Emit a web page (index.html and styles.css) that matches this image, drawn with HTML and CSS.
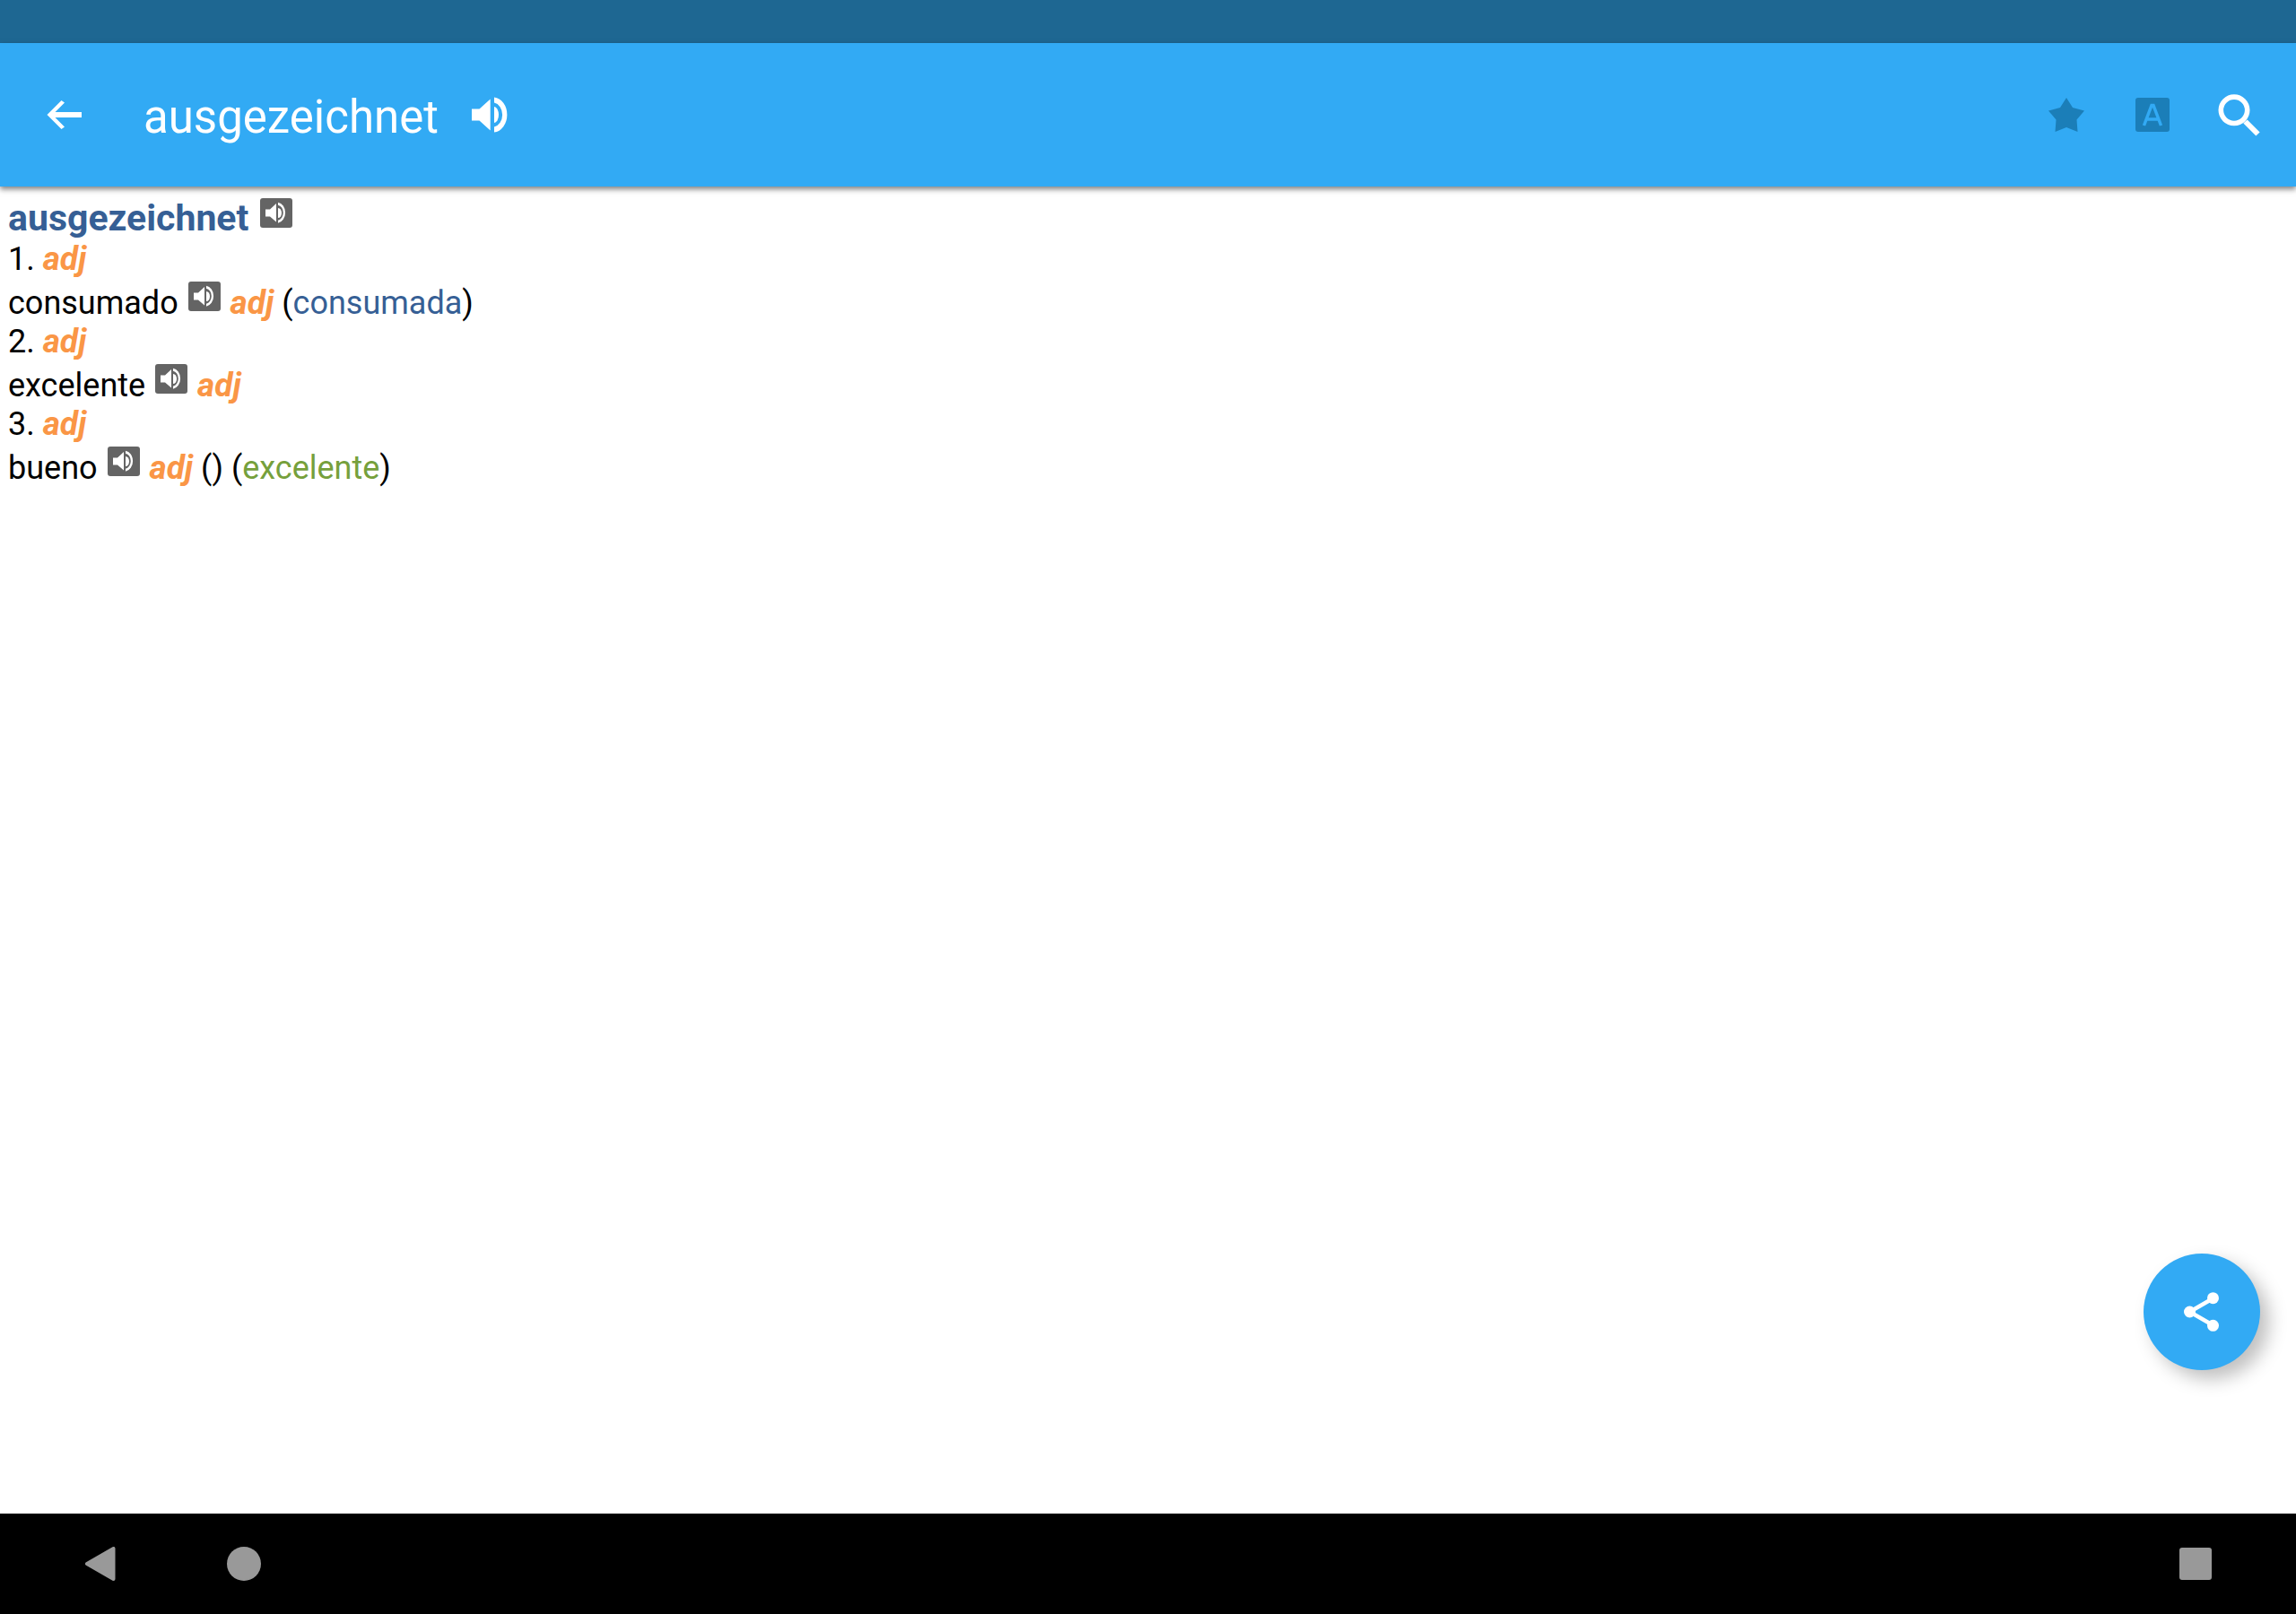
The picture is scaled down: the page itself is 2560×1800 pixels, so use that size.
FILE: index.html
```html
<!DOCTYPE html>
<html lang="de">
<head>
<meta charset="utf-8">
<title>ausgezeichnet</title>
<link rel="stylesheet" href="styles.css">
</head>
<body>
<svg width="0" height="0" class="sprite" aria-hidden="true">
  <symbol id="speaker-badge" viewBox="0 0 36 33">
    <rect width="36" height="33" rx="3" fill="#646464"/>
    <path d="M6 12.500h5L18 6v20.500L11 20.500H6z" fill="#fff"/>
    <path d="M20 11a4 5.500 0 0 1 0 11z" fill="#fff"/>
    <path d="M20 4.700a9.300 11.600 0 0 1 0 23v-3a6.800 8.600 0 0 0 0-17z" fill="#fff"/>
  </symbol>
</svg>
<div class="status-bar"></div>
<header class="app-bar">
  <button class="icon-button back" aria-label="Back">
    <svg width="40" height="36" viewBox="0 0 40 36"><path d="M.5 18 16.500 2 20 4.500 9.500 15H39v6H9.500L20 31.500 16.500 34z" fill="#fff"/></svg>
  </button>
  <h1 class="title">ausgezeichnet</h1>
  <button class="icon-button speak" aria-label="Pronounce">
    <svg width="42" height="40" viewBox="0 0 42 40"><path d="M0 13.500h8.500L20.700 2.500v35L8.500 26.500H0z" fill="#fff"/><path d="M25 11a5 9 0 0 1 0 18z" fill="#fff"/><path d="M25 .5a16 19.600 0 0 1 0 39v-6a11 13.700 0 0 0 0-27z" fill="#fff"/></svg>
  </button>
  <div class="actions">
    <button class="icon-button" aria-label="Favourite">
      <svg width="40" height="38" viewBox="0 0 40 38"><path d="M20 0 27 11 40 14.500 31.500 24.500 32.500 38 20 33 7.500 38 8.500 24.500 0 14.500 13 11z" fill="#1b7eb8"/></svg>
    </button>
    <button class="icon-button" aria-label="Text">
      <svg width="38" height="38" viewBox="0 0 38 38"><rect width="38" height="38" rx="3" fill="#1b7eb8"/><path d="M9.500 31 18 8.500h2L28.500 31M12.500 24h13" fill="none" stroke="#32aaf4" stroke-width="3.500"/></svg>
    </button>
    <button class="icon-button" aria-label="Search">
      <svg width="48" height="48" viewBox="0 0 48 48"><circle cx="19" cy="18.800" r="14.700" fill="none" stroke="#fff" stroke-width="5.600"/><path d="m31.500 31.500 14 14" stroke="#fff" stroke-width="6"/></svg>
    </button>
  </div>
</header>
<main class="entry">
  <h2 class="headword">ausgezeichnet <button class="badge" aria-label="Pronounce"><svg width="36" height="33"><use href="#speaker-badge"/></svg></button></h2>
  <p class="sense">1. <em>adj</em></p>
  <p class="term">consumado <button class="badge" aria-label="Pronounce"><svg width="36" height="33"><use href="#speaker-badge"/></svg></button> <em>adj</em> (<span class="form">consumada</span>)</p>
  <p class="sense">2. <em>adj</em></p>
  <p class="term">excelente <button class="badge" aria-label="Pronounce"><svg width="36" height="33"><use href="#speaker-badge"/></svg></button> <em>adj</em></p>
  <p class="sense">3. <em>adj</em></p>
  <p class="term">bueno <button class="badge" aria-label="Pronounce"><svg width="36" height="33"><use href="#speaker-badge"/></svg></button> <em>adj</em> () (<span class="hint">excelente</span>)</p>
  <button class="fab" aria-label="Share">
    <svg width="40" height="44" viewBox="0 0 40 44"><path d="M32.500 7 6.500 22l26 15" fill="none" stroke="#fff" stroke-width="4.500"/><g fill="#fff"><circle cx="32.500" cy="6.700" r="6.500"/><circle cx="6.500" cy="22" r="6.500"/><circle cx="32.500" cy="37.300" r="6.500"/></g></svg>
  </button>
</main>
<nav class="nav-bar">
  <button class="icon-button" aria-label="Back"><svg width="34" height="38" viewBox="0 0 34 38"><path d="M2 19 31.500 2v34z" fill="#999" stroke="#999" stroke-width="4" stroke-linejoin="round"/></svg></button>
  <button class="icon-button" aria-label="Home"><svg width="38" height="38"><circle cx="19" cy="19" r="19" fill="#999"/></svg></button>
  <button class="icon-button recent" aria-label="Recent apps"><svg width="36" height="36"><rect width="36" height="36" rx="3" fill="#999"/></svg></button>
</nav>
</body>
</html>
```
FILE: styles.css
```css
* {
  box-sizing: border-box;
}

body {
  margin: 0;
  min-height: 100vh;
  display: flex;
  flex-direction: column;
  background: #fff;
  color: #000;
  font-family: Roboto, "Liberation Sans", sans-serif;
}

button {
  padding: 0;
  border: 0;
  background: none;
}

svg {
  display: block;
}

.sprite {
  position: absolute;
}

.status-bar {
  height: 48px;
  background: #1e6792;
}

.app-bar {
  display: flex;
  align-items: center;
  height: 160px;
  padding: 0 16px 0 24px;
  background: #32aaf4;
  box-shadow: 0 3px 6px rgba(0, 0, 0, 0.5);
}

.icon-button {
  display: flex;
  align-items: center;
  justify-content: center;
  width: 96px;
  height: 96px;
}

.title {
  margin: 0;
  padding: 6px 0 0 40px;
  color: #fff;
  font-size: 51px;
  font-weight: 400;
  line-height: 64px;
}

.speak {
  margin-left: 10px;
}

.actions {
  display: flex;
  margin-left: auto;
}

.entry {
  position: relative;
  flex: 1;
  padding: 13px 9px;
  font-size: 36px;
  line-height: 43px;
}

.headword,
.sense,
.term {
  margin: 0;
}

.headword {
  padding-bottom: 3px;
  color: #365f95;
  font-size: 41px;
  font-weight: 700;
}

.term {
  padding-top: 3px;
}

.badge {
  display: inline-block;
  margin: 0 2px;
  vertical-align: 3px;
}

em {
  color: #fa9646;
  font-size: 37px;
  font-weight: 700;
  line-height: 1;
}

.form {
  color: #365f95;
}

.hint {
  color: #76a03c;
}

.fab {
  position: absolute;
  right: 40px;
  bottom: 160px;
  display: flex;
  align-items: center;
  justify-content: center;
  width: 130px;
  height: 130px;
  border-radius: 50%;
  background: #32aaf4;
  box-shadow: 10px 10px 20px rgba(0, 0, 0, 0.25);
}

.nav-bar {
  display: flex;
  align-items: center;
  gap: 64px;
  height: 112px;
  padding: 0 64px;
  background: #000;
}

.recent {
  margin-left: auto;
}
```
